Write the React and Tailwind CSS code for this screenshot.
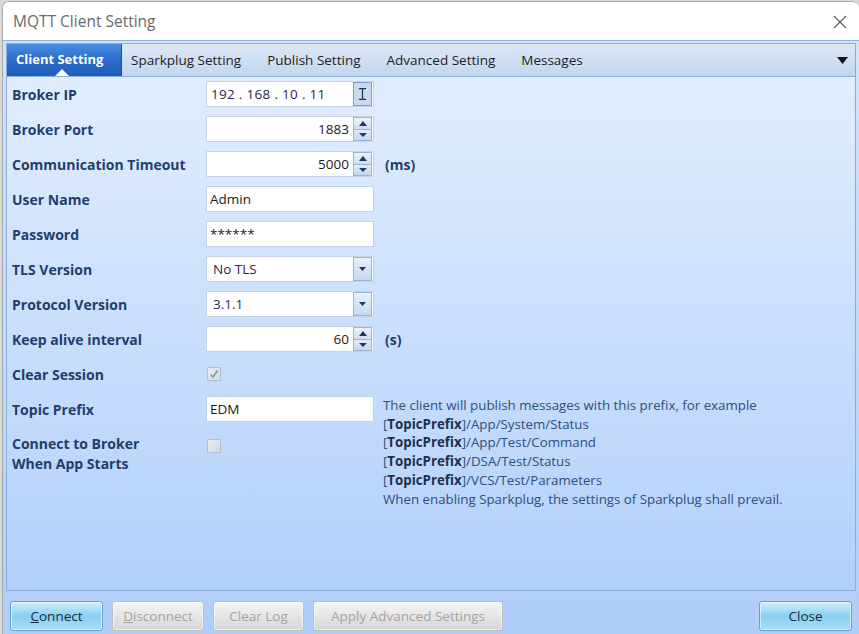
import React from 'react';

const font = { fontFamily: '"Open Sans", "Noto Sans", sans-serif' };

function Spinner() {
  return (
    <div className="flex flex-col w-[19px] h-[24px] border border-[#98b2d8] shrink-0">
      <div className="flex-1 flex items-center justify-center bg-gradient-to-b from-[#edf3fb] to-[#cddcf2] border-b border-[#98b2d8]">
        <svg width="8" height="5" viewBox="0 0 8 5"><path d="M0 5 L4 0 L8 5 Z" fill="#22375f" /></svg>
      </div>
      <div className="flex-1 flex items-center justify-center bg-gradient-to-b from-[#e3ecf9] to-[#c4d6f0]">
        <svg width="8" height="4" viewBox="0 0 8 4"><path d="M0 0 L8 0 L4 4 Z" fill="#22375f" /></svg>
      </div>
    </div>
  );
}

function NumBox({ value }) {
  return (
    <div className="flex items-center w-[168px] h-[26px] bg-white border border-[#c6d3e5] pl-1 pr-[1px]">
      <span className="flex-1 text-right pr-[4px] text-[13.5px] text-[#1c1c1c]">{value}</span>
      <Spinner />
    </div>
  );
}

function TextBox({ value, className = '' }) {
  return (
    <div className={`flex items-center w-[168px] h-[26px] bg-white border border-[#c6d3e5] pl-[3px] text-[13.5px] text-[#1c1c1c] ${className}`}>
      {value}
    </div>
  );
}

function Combo({ value }) {
  return (
    <div className="flex items-center w-[168px] h-[26px] bg-white border border-[#c6d3e5] pl-[6px] pr-[1px]">
      <span className="flex-1 text-[13.5px] text-[#2a2a55]">{value}</span>
      <div className="flex items-center justify-center w-[19px] h-[24px] border border-[#98b2d8] bg-gradient-to-b from-[#e9f1fb] to-[#c6d8f1]">
        <svg width="7" height="4" viewBox="0 0 7 4"><path d="M0 0 L7 0 L3.5 4 Z" fill="#22375f" /></svg>
      </div>
    </div>
  );
}

function Check({ checked }) {
  return (
    <div className="w-[14px] h-[14px] ml-[1px] border border-[#b4bfcc] bg-gradient-to-br from-[#e8ecf1] to-[#d2d9e2] flex items-center justify-center">
      {checked && (
        <svg width="10" height="10" viewBox="0 0 10 10">
          <path d="M1.5 5.5 L4 8 L8.5 1.5" stroke="#8a96a6" strokeWidth="1.6" fill="none" />
        </svg>
      )}
    </div>
  );
}

function Label({ children }) {
  return <div className="flex items-center h-[26px] text-[14px] font-bold text-[#233d6c]">{children}</div>;
}

function Btn({ children, w, disabled }) {
  const cls = disabled
    ? 'border-[#b9bec6] bg-gradient-to-b from-[#f4f4f4] via-[#e6e6e6] to-[#d6d6d6] text-[#a3a3a3]'
    : 'border-[#6f9cc2] bg-gradient-to-b from-[#d3f0fc] via-[#86d0ef] to-[#a8def6] text-[#1b2a3f]';
  return (
    <div className={`flex items-center justify-center h-[30px] rounded-[3px] border text-[13.5px] shadow-[inset_0_0_0_1px_rgba(255,255,255,0.6)] ${cls}`} style={{ width: w }}>
      {children}
    </div>
  );
}

export default function App() {
  const tabs = ['Sparkplug Setting', 'Publish Setting', 'Advanced Setting', 'Messages'];
  return (
    <div className="w-[859px] h-[634px] bg-[#d9d9d9] overflow-hidden" style={font}>
      <div className="ml-[2px] mt-[1px] h-[633px] bg-white border-l border-t border-[#a9a9a9] rounded-tl-[7px] rounded-tr-[7px] flex flex-col overflow-hidden">
        {/* title bar */}
        <div className="h-[38px] flex items-center justify-between pl-[10px] pr-[12px] pt-[1px] bg-white shrink-0">
          <span className="text-[15.5px] text-[#6b6b6b]">MQTT Client Setting</span>
          <svg width="14" height="14" viewBox="0 0 14 14">
            <path d="M1 1 L13 13 M13 1 L1 13" stroke="#5a5a5a" strokeWidth="1.1" />
          </svg>
        </div>

        {/* body */}
        <div className="flex-1 flex flex-col bg-gradient-to-b from-[#d3e3f8] to-[#b0cefa] border-t border-[#8fb2e0] pl-[3px] pr-[3px]">
          <div className="mt-[2px] flex flex-col h-[548px] border border-[#8aaedc]">
            {/* tab strip */}
            <div className="h-[33px] flex items-stretch bg-gradient-to-b from-[#dce7f6] to-[#c3d6ee] border-b border-[#8aaedc] shrink-0">
              <div className="relative w-[115px] flex items-center pl-[9px] text-[13px] font-bold text-white bg-gradient-to-b from-[#4a8ee0] via-[#2a6ccc] to-[#1f5db8] border-r border-[#1f4f99]">
                Client Setting
                <svg className="absolute left-[48px] bottom-0" width="14" height="7" viewBox="0 0 14 7">
                  <path d="M0 7 L7 0 L14 7 Z" fill="#ffffff" />
                </svg>
              </div>
              {tabs.map((t, i) => (
                <div key={t} className={`flex items-center pr-[13px] text-[13.5px] text-[#1e1e1e] ${i === 0 ? 'pl-[9px]' : 'pl-[13px]'}`}>{t}</div>
              ))}
              <div className="flex-1" />
              <div className="flex items-center pr-[7px]">
                <svg width="11" height="7" viewBox="0 0 11 7"><path d="M0 0 L11 0 L5.5 7 Z" fill="#111" /></svg>
              </div>
            </div>

            {/* panel */}
            <div className="flex-1 bg-gradient-to-b from-[#e1edfd] to-[#b2d0fb] pt-[4px] pl-[5px]">
              <div className="grid grid-cols-[194px_168px_1fr] gap-y-[9px] items-start">
                <Label>Broker IP</Label>
                <div className="flex items-center w-[168px] h-[26px] bg-white border border-[#c6d3e5] pl-[4px] pr-[1px]">
                  <span className="flex-1 text-[13.5px] text-[#2d1f4a] tracking-[0.3px]">192 . 168 . 10 . 11</span>
                  <div className="flex items-center justify-center w-[19px] h-[24px] border border-[#7d9cc8] bg-[#c7daf3]">
                    <svg width="9" height="12" viewBox="0 0 9 12">
                      <path d="M1 0.7 H8 M1 11.3 H8 M4.5 0.7 V11.3" stroke="#2a2f3a" strokeWidth="1.2" fill="none" />
                    </svg>
                  </div>
                </div>
                <div />

                <Label>Broker Port</Label>
                <NumBox value="1883" />
                <div />

                <Label>Communication Timeout</Label>
                <NumBox value="5000" />
                <div className="flex items-center h-[26px] pl-[11px] text-[14px] font-bold text-[#233d6c]">(ms)</div>

                <Label>User Name</Label>
                <TextBox value="Admin" />
                <div />

                <Label>Password</Label>
                <TextBox value="******" className="items-start pt-[2px]" />
                <div />

                <Label>TLS Version</Label>
                <Combo value="No TLS" />
                <div />

                <Label>Protocol Version</Label>
                <Combo value="3.1.1" />
                <div />

                <Label>Keep alive interval</Label>
                <NumBox value="60" />
                <div className="flex items-center h-[26px] pl-[11px] text-[14px] font-bold text-[#233d6c]">(s)</div>

                <Label>Clear Session</Label>
                <div className="h-[26px] flex items-center"><Check checked /></div>
                <div />

                <Label>Topic Prefix</Label>
                <TextBox value="EDM" className="text-[#2a0f18]" />
                <div className="h-[26px] overflow-visible whitespace-nowrap pl-[9px] text-[13.3px] leading-[18.7px] text-[#2e4f80]">
                  <div>The client will publish messages with this prefix, for example</div>
                  <div>[<b className="text-[#1f2f4c]">TopicPrefix</b>]/App/System/Status</div>
                  <div>[<b className="text-[#1f2f4c]">TopicPrefix</b>]/App/Test/Command</div>
                  <div>[<b className="text-[#1f2f4c]">TopicPrefix</b>]/DSA/Test/Status</div>
                  <div>[<b className="text-[#1f2f4c]">TopicPrefix</b>]/VCS/Test/Parameters</div>
                  <div>When enabling Sparkplug, the settings of Sparkplug shall prevail.</div>
                </div>

                <div className="mt-[3px] text-[14px] font-bold leading-[20px] text-[#233d6c]">
                  Connect to Broker<br />When App Starts
                </div>
                <div className="pt-[8px]"><Check /></div>
                <div />
              </div>
            </div>
          </div>

          {/* buttons */}
          <div className="flex items-center gap-[9px] mt-[10px] pl-[4px] pr-[4px]">
            <Btn w={93}><span><u>C</u>onnect</span></Btn>
            <Btn w={92} disabled><span><u>D</u>isconnect</span></Btn>
            <Btn w={91} disabled>Clear Log</Btn>
            <Btn w={190} disabled>Apply Advanced Settings</Btn>
            <div className="flex-1" />
            <Btn w={93}>Close</Btn>
          </div>
        </div>
      </div>
    </div>
  );
}
